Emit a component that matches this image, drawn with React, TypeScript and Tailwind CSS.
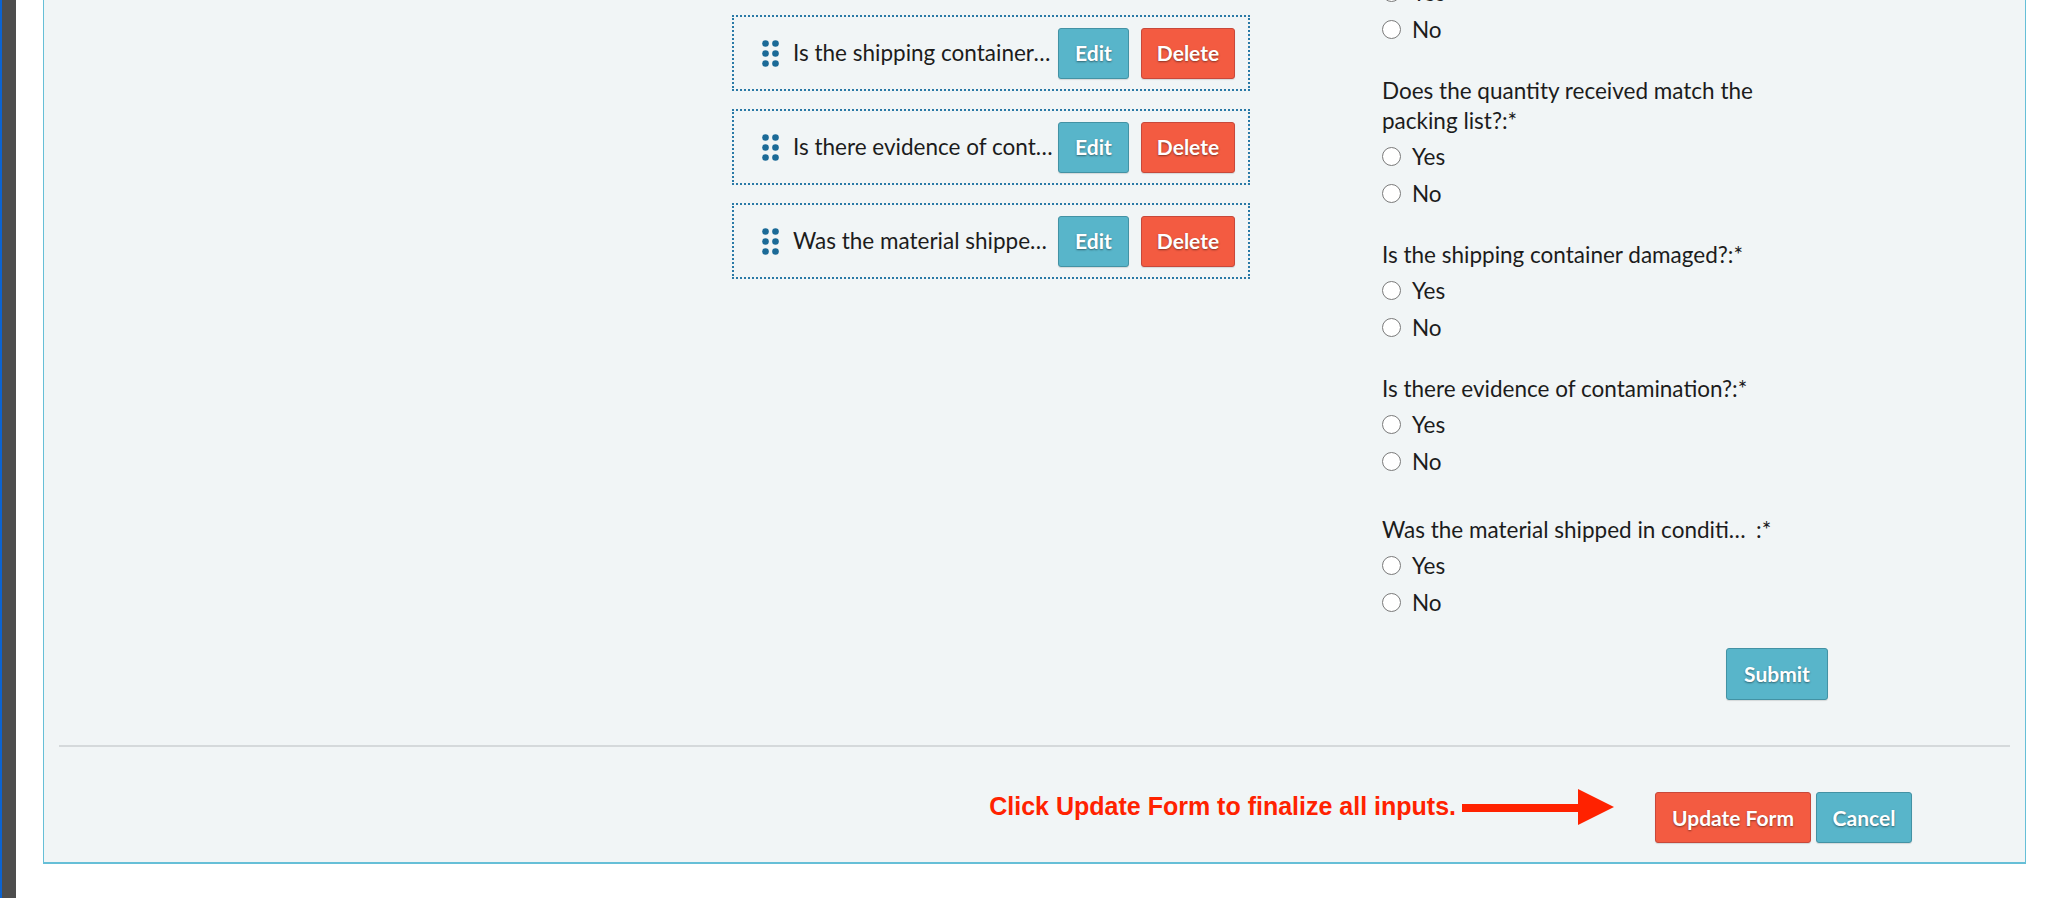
import React from 'react';

const items = [
  'Is the shipping container damaged?',
  'Is there evidence of contamination?',
  'Was the material shipped in conditions as specified?',
];

const questions = [
  { label: 'Does the quantity received match the packing list?:*', wrap: true },
  { label: 'Is the shipping container damaged?:*' },
  { label: 'Is there evidence of contamination?:*' },
  { label: 'Was the material shipped in conditions as specified?', truncate: true },
];

function DragHandle() {
  return (
    <svg width="17" height="27" viewBox="0 0 17 27" className="shrink-0">
      {[3.5, 13.5].map(cx =>
        [3.5, 13.5, 23.5].map(cy => <circle key={`${cx}-${cy}`} cx={cx} cy={cy} r="3.3" fill="#1b6a97" />)
      )}
    </svg>
  );
}

function Radio({ label }: { label: string }) {
  return (
    <label className="flex items-center h-[37px] gap-[11px]">
      <span className="w-[19px] h-[19px] rounded-full border border-[#7a7a7a] bg-white shrink-0" />
      <span>{label}</span>
    </label>
  );
}

const btn =
  'rounded-[3px] border text-white font-bold text-[21px] [text-shadow:0_1px_2px_rgba(0,0,0,0.45)] shadow-[0_1px_1px_rgba(0,0,0,0.12)]';
const blue = 'bg-[#58b5ca] border-[#4392a4]';
const red = 'bg-[#f35b41] border-[#c8483a]';

export default function App() {
  return (
    <div className="min-h-screen bg-white flex overflow-hidden text-[#1c1c1c]" style={{ fontFamily: 'Lato, "Open Sans", sans-serif' }}>
      <div className="w-[2px] bg-[#0b63d1] shrink-0" />
      <div className="w-[14px] bg-[#4d4d4d] shrink-0" />
      <div className="flex-1 pl-[27px] pr-[22px]">
        <div className="-mt-[2px] h-[866px] border border-b-2 border-[#66bfd7] bg-[#f1f5f6] flex flex-col">
          {/* body */}
          <div className="flex pl-[688px] pt-[1px]">
            <div className="w-[518px] flex flex-col gap-[18px] pt-[15px]">
              {items.map(t => (
                <div key={t} className="h-[76px] border-2 border-dotted border-[#2a79a6] flex items-center pl-[28px] pr-[13px]">
                  <DragHandle />
                  <span className="ml-[14px] flex-1 truncate text-[22.5px]">{t}</span>
                  <button className={`${btn} ${blue} h-[51px] w-[71px] ml-[3px]`}>Edit</button>
                  <button className={`${btn} ${red} h-[51px] w-[94px] ml-[12px]`}>Delete</button>
                </div>
              ))}
            </div>
            <div className="w-[446px] ml-[132px] -mt-[26px] text-[22.5px] flex flex-col">
              <Radio label="Yes" />
              <Radio label="No" />
              {questions.map(q => (
                <div key={q.label} className={q.truncate ? 'mt-[35px]' : 'mt-[28px]'}>
                  {q.truncate ? (
                    <div className="flex leading-[30px] mb-[2px]">
                      <span className="truncate max-w-[368px]">{q.label}</span>
                      <span className="ml-[6px]">:*</span>
                    </div>
                  ) : (
                    <div className="leading-[30px] mb-[2px] max-w-[400px]">{q.label}</div>
                  )}
                  <Radio label="Yes" />
                  <Radio label="No" />
                </div>
              ))}
              <div className="flex justify-end mt-[27px]">
                <button className={`${btn} ${blue} h-[52px] w-[102px]`}>Submit</button>
              </div>
            </div>
          </div>
          <div className="mt-[45px] mx-[15px] h-[2px] bg-[#d5d9db]" />
          {/* footer */}
          <div className="flex justify-end items-start pr-[113px] pt-[42px]">
            <div className="flex items-center h-[36px]">
              <span className="text-[25px] font-bold text-[#ff2200]" style={{ fontFamily: '"Liberation Sans", Arial, sans-serif' }}>
                Click Update Form to finalize all inputs.
              </span>
              <svg width="152" height="36" viewBox="0 0 152 36" className="ml-[6px]">
                <rect x="0" y="15" width="118" height="8" fill="#ff2200" />
                <polygon points="116,0 152,18 116,36" fill="#ff2200" />
              </svg>
            </div>
            <div className="flex gap-[5px] ml-[41px] mt-[3px]">
              <button className={`${btn} ${red} h-[51px] w-[156px]`}>Update Form</button>
              <button className={`${btn} ${blue} h-[51px] w-[96px]`}>Cancel</button>
            </div>
          </div>
        </div>
      </div>
    </div>
  );
}
